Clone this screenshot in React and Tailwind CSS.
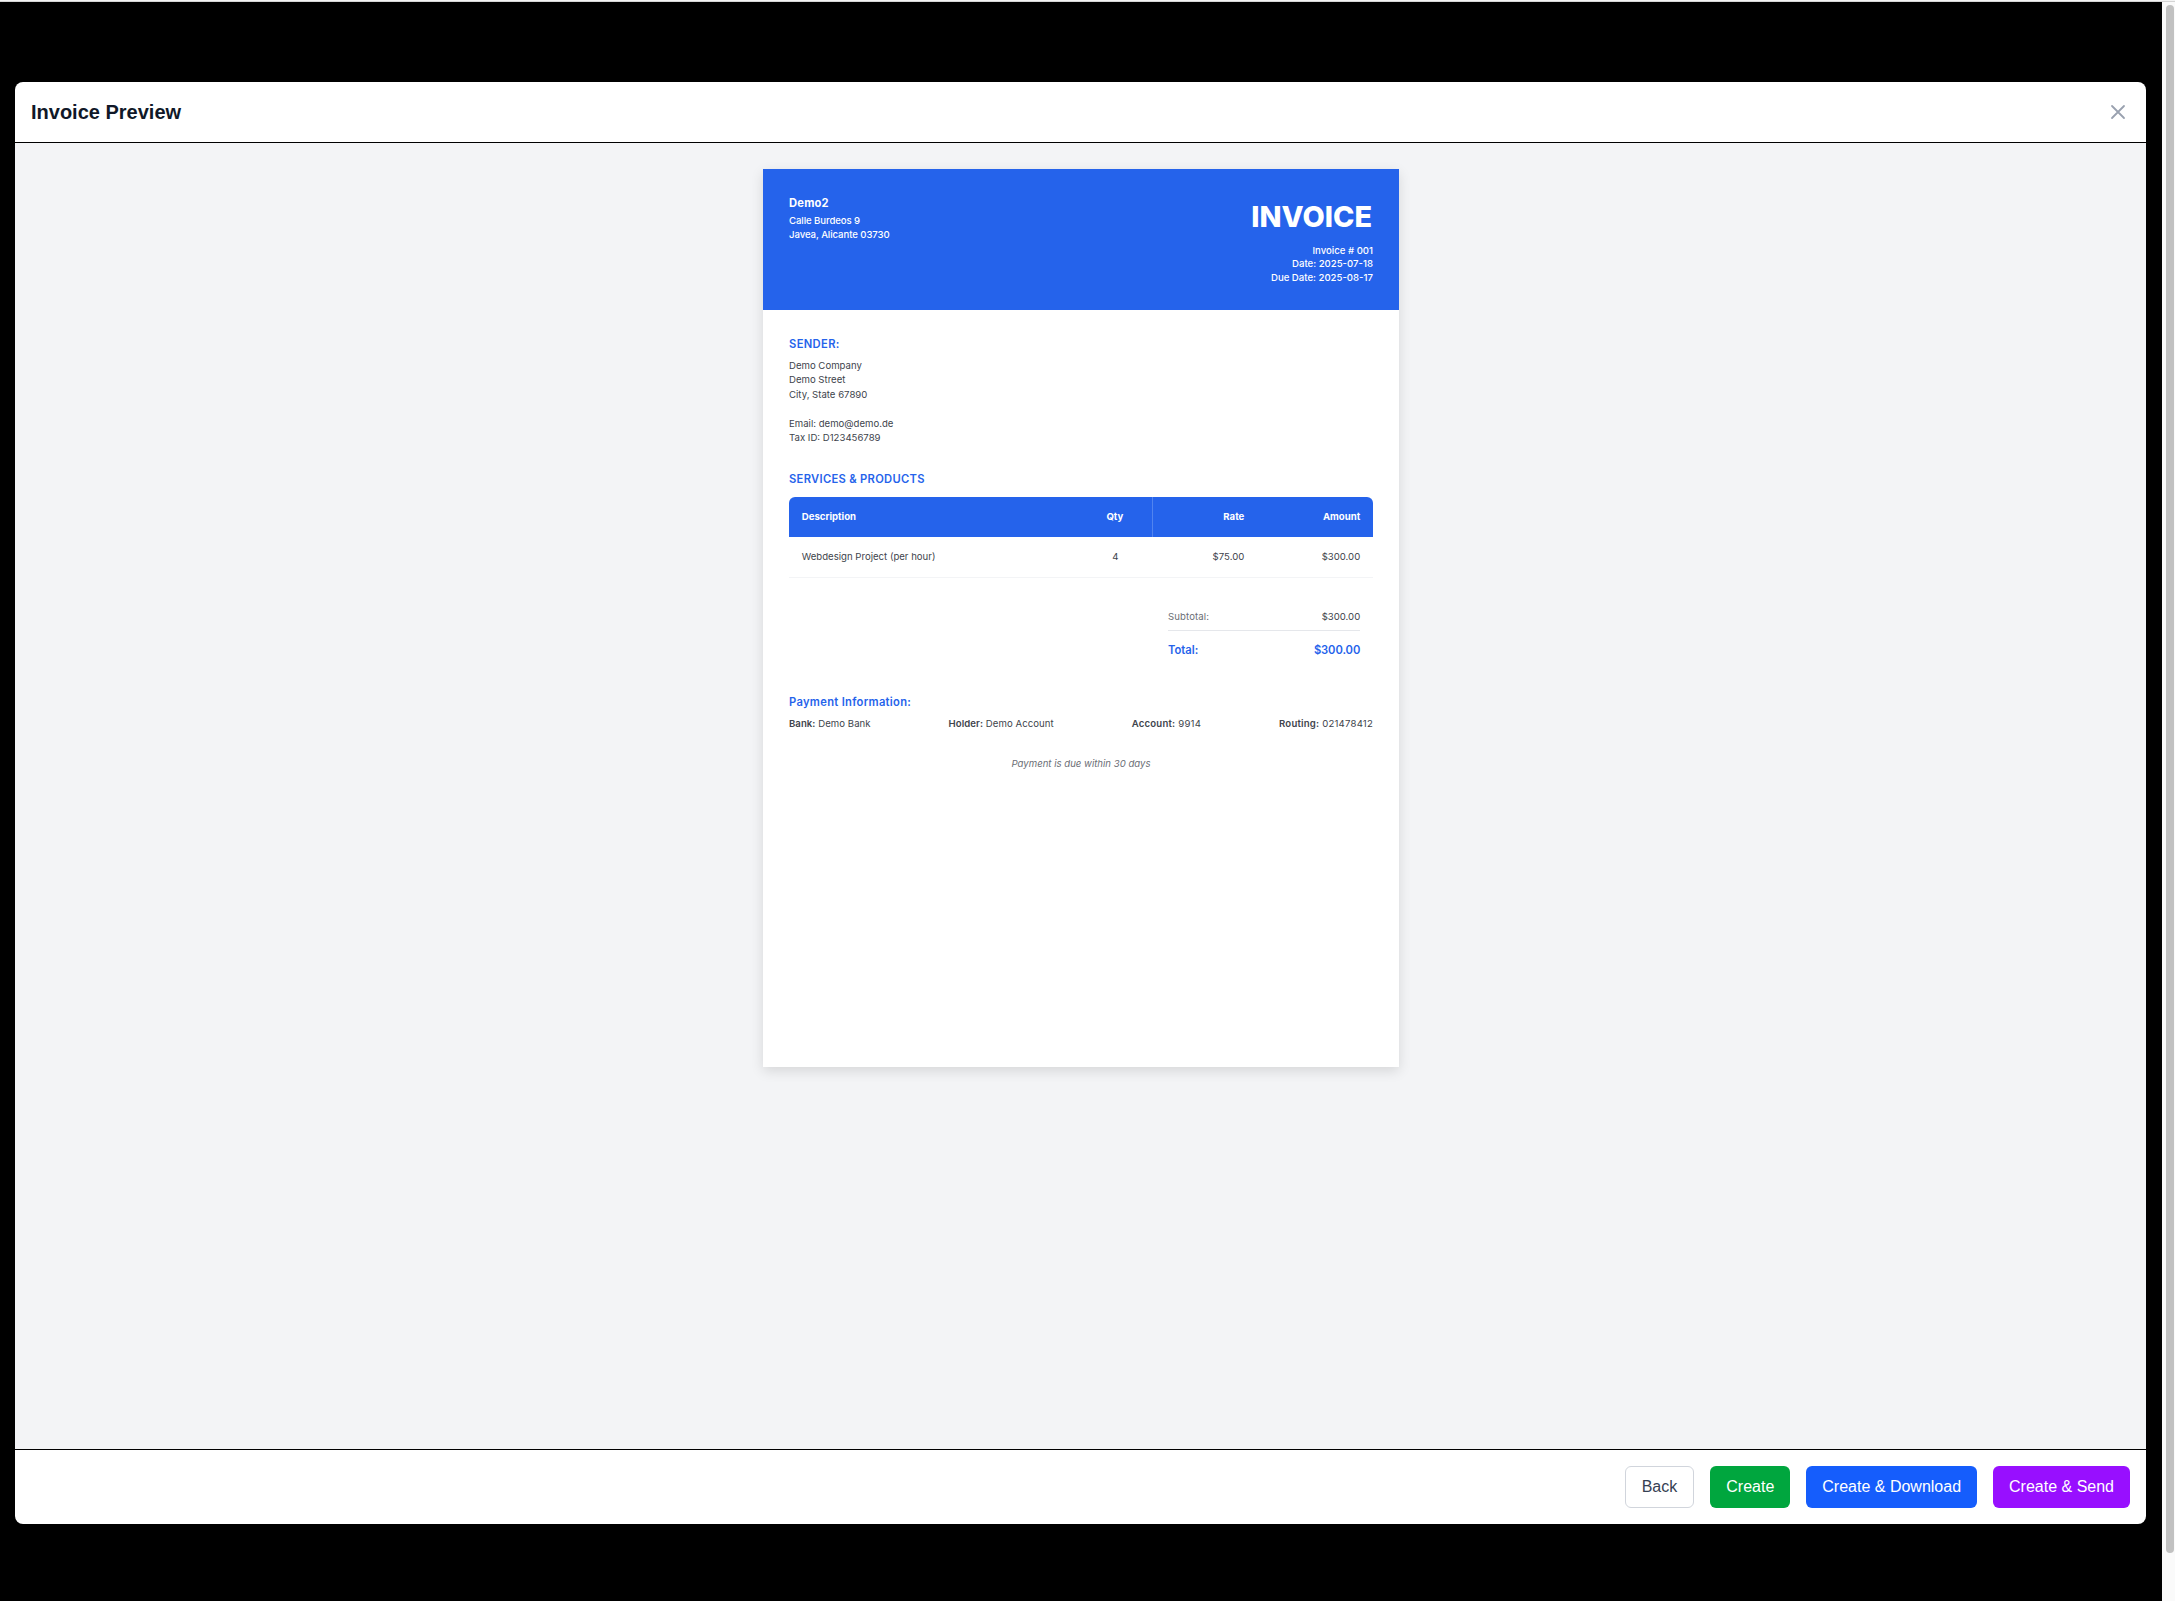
const lineItems = [
  { description: "Webdesign Project (per hour)", qty: "4", rate: "$75.00", amount: "$300.00" },
];

const paymentDetails = [
  { label: "Bank:", value: "Demo Bank", spacing: "tracking-[0.05px]" },
  { label: "Holder:", value: "Demo Account", spacing: "tracking-[0.06px]" },
  { label: "Account:", value: "9914", spacing: "tracking-[0.2px]" },
  { label: "Routing:", value: "021478412", spacing: "tracking-[0.2px]" },
];

function InvoiceHeader() {
  return (
    <header className="flex h-[141px] items-start justify-between bg-[#2563eb] px-[26px] pt-[26px] text-white">
      <div className="text-[9.6px] leading-[14px] font-medium tracking-[-0.08px]">
        <h2 className="mb-[3px] text-[11.2px] leading-4 font-bold tracking-[0.2px]">Demo2</h2>
        <p>Calle Burdeos 9</p>
        <p>Javea, Alicante 03730</p>
      </div>
      <div className="text-right text-[9.6px] leading-[13.44px] font-medium">
        <h1 className="mr-px mb-[5px] text-[28.8px] leading-[44px] font-extrabold">INVOICE</h1>
        <p>Invoice # 001</p>
        <p>Date: 2025-07-18</p>
        <p>Due Date: 2025-08-17</p>
      </div>
    </header>
  );
}

function ItemsTable() {
  return (
    <table className="mt-[10px] w-full table-fixed border-separate border-spacing-0">
      <colgroup>
        <col />
        <col className="w-[75.5px]" />
        <col className="w-[104px]" />
        <col className="w-[115.9px]" />
      </colgroup>
      <thead>
        <tr className="h-10 text-white">
          <th className="rounded-tl-[6px] bg-[#2563eb] px-[12.8px] py-0 text-left font-bold">Description</th>
          <th className="border-r border-[#5184ef] bg-[#2563eb] p-0 text-center font-bold">Qty</th>
          <th className="bg-[#2563eb] px-[12.8px] py-0 text-right font-bold">Rate</th>
          <th className="rounded-tr-[6px] bg-[#2563eb] px-[12.8px] py-0 text-right font-bold">Amount</th>
        </tr>
      </thead>
      <tbody>
        {lineItems.map((item) => (
          <tr key={item.description} className="h-[41px]">
            <td className="border-b border-gray-100 px-[12.8px] py-0">{item.description}</td>
            <td className="border-b border-gray-100 p-0 text-center">{item.qty}</td>
            <td className="border-b border-gray-100 px-[12.8px] py-0 text-right">{item.rate}</td>
            <td className="border-b border-gray-100 px-[12.8px] py-0 text-right">{item.amount}</td>
          </tr>
        ))}
      </tbody>
    </table>
  );
}

function Invoice() {
  return (
    <article className="h-[898.4px] w-[636px] shrink-0 bg-white font-['Inter',sans-serif] text-[9.6px] leading-[14.4px] text-[#40444c] shadow-[0_4px_12px_rgba(0,0,0,0.12)]">
      <InvoiceHeader />
      <div className="px-[26px] pt-[26px]">
        <h3 className="mb-[7px] text-[11.2px] leading-4 font-semibold tracking-[0.35px] text-[#2563eb]">SENDER:</h3>
        <p>Demo Company</p>
        <p>Demo Street</p>
        <p>City, State 67890</p>
        <p className="mt-[14.4px]">Email: demo@demo.de</p>
        <p>Tax ID: D123456789</p>

        <h3 className="mt-[26px] text-[11.2px] leading-4 font-semibold tracking-[0.3px] text-[#2563eb]">SERVICES &amp; PRODUCTS</h3>
        <ItemsTable />

        <div className="mt-[31.6px] mr-[12.8px] ml-auto w-[192.2px]">
          <div className="flex justify-between border-b-[1.6px] border-gray-200 pb-[6px]">
            <span className="tracking-[0.1px] text-[#6b6e75]">Subtotal:</span>
            <span>$300.00</span>
          </div>
          <div className="mt-[11px] flex justify-between text-[11.2px] leading-4 font-semibold text-[#2563eb]">
            <span>Total:</span>
            <span className="tracking-[-0.08px]">$300.00</span>
          </div>
        </div>

        <h3 className="mt-[36px] text-[11.2px] leading-4 font-semibold tracking-[0.3px] text-[#2563eb]">Payment Information:</h3>
        <div className="mt-[7px] flex justify-between">
          {paymentDetails.map((detail) => (
            <p key={detail.label} className={detail.spacing}>
              <strong className="font-semibold">{detail.label}</strong> {detail.value}
            </p>
          ))}
        </div>
        <p className="mt-[25.6px] text-center text-[#6b6e75] italic">Payment is due within 30 days</p>
      </div>
    </article>
  );
}

function CloseIcon() {
  return (
    <svg className="size-6" viewBox="0 0 24 24" fill="none" stroke="currentColor" strokeWidth="1.8" strokeLinecap="round" strokeLinejoin="round">
      <path d="M6 18L18 6M6 6l12 12" />
    </svg>
  );
}

export default function App() {
  return (
    <div className="flex h-[1601px] w-[2175px] flex-col overflow-hidden bg-black font-['Liberation_Sans',Arial,sans-serif]">
      <div className="h-[2px] shrink-0 border-b border-[#d4d4d4] bg-[#f4f4f4]" />
      <div className="flex min-h-0 flex-1">
        <div className="flex-1 pt-20 pr-4 pl-[15px]">
          <section className="flex h-[1442px] flex-col overflow-hidden rounded-lg bg-white">
            <div className="flex h-[61px] shrink-0 items-center justify-between border-b border-black px-4">
              <h2 className="text-xl font-semibold text-gray-900">Invoice Preview</h2>
              <button className="text-gray-400" aria-label="Close">
                <CloseIcon />
              </button>
            </div>
            <div className="flex min-h-0 flex-1 items-start justify-center bg-gray-100 pt-[26px] pl-px">
              <Invoice />
            </div>
            <div className="flex shrink-0 justify-end gap-4 border-t border-black p-4 text-base font-medium text-white">
              <button className="rounded-md border border-gray-300 px-4 py-2 font-normal text-gray-700">Back</button>
              <button className="rounded-md bg-green-600 px-4 py-2">Create</button>
              <button className="rounded-md bg-blue-600 px-4 py-2">Create &amp; Download</button>
              <button className="rounded-md bg-[#980fff] px-4 py-2">Create &amp; Send</button>
            </div>
          </section>
        </div>
        <div className="w-[13px] bg-[#fafafa] pt-[3px] pl-1">
          <div className="h-[1548px] w-2 rounded-full bg-[#c1c1c1]" />
        </div>
      </div>
    </div>
  );
}
